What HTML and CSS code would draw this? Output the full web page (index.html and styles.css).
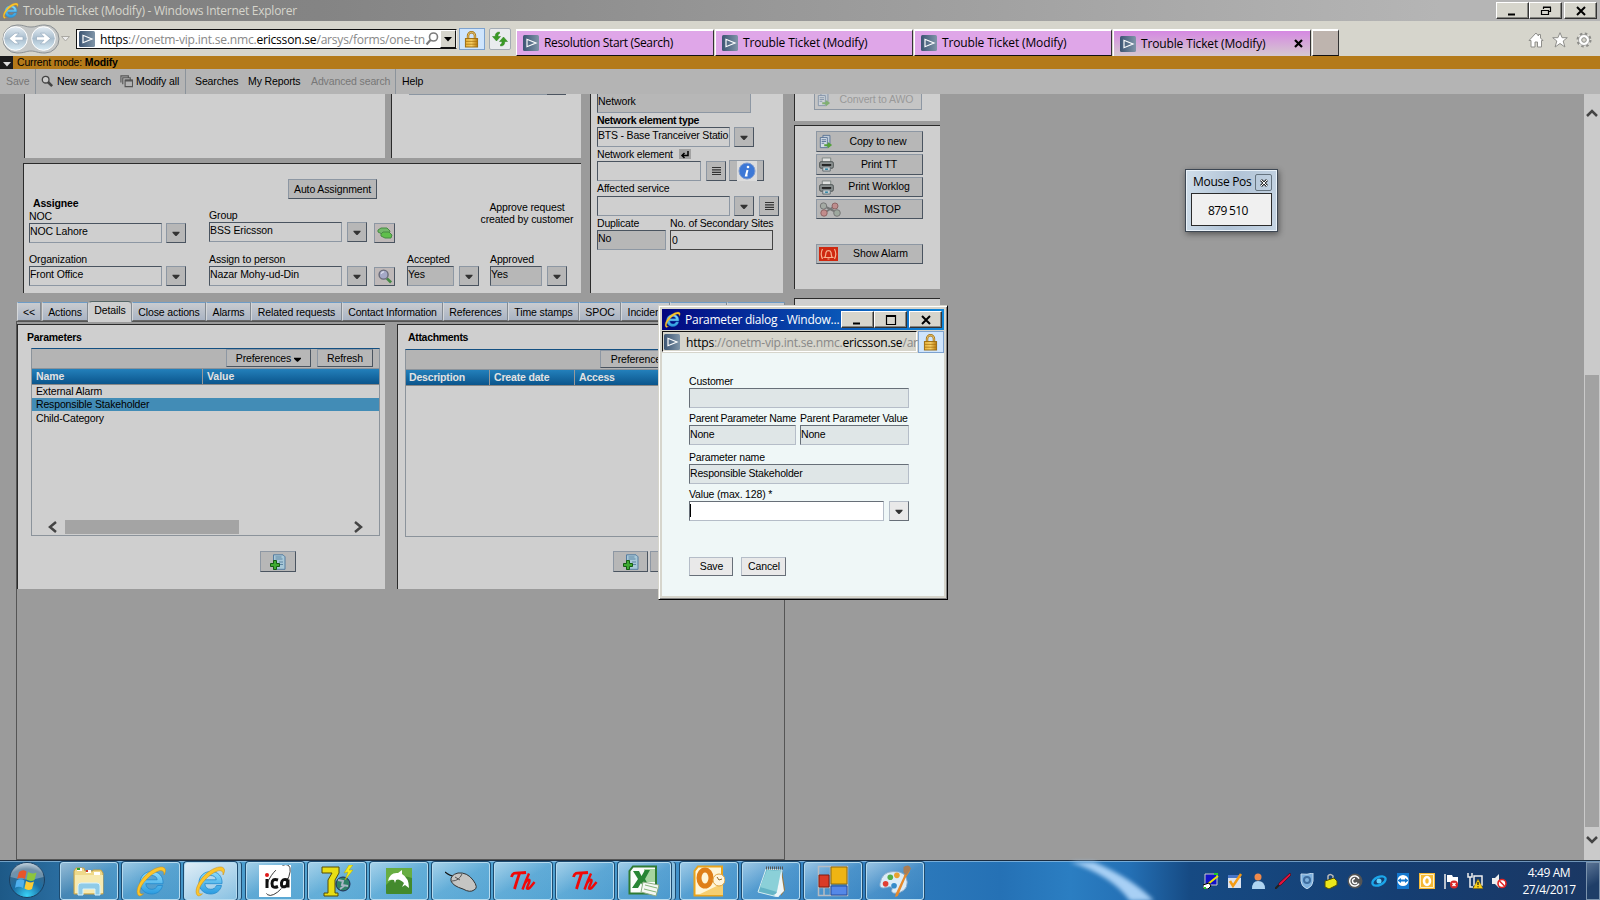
FILE: index.html
```html
<!DOCTYPE html>
<html lang="en">
<head>
<meta charset="utf-8">
<title>Trouble Ticket (Modify)</title>
<link rel="stylesheet" href="styles.css">
</head>
<body>
<svg class="defs" aria-hidden="true">
  <defs>
    <linearGradient id="g-site" x1="0" x2="1"><stop offset="0" stop-color="#3c5573"/><stop offset="1" stop-color="#8095a8"/></linearGradient>
    <linearGradient id="g-ie" x1="0" y1="0" x2="0" y2="1"><stop offset="0" stop-color="#8fdcfb"/><stop offset="1" stop-color="#2a9be0"/></linearGradient>
    <linearGradient id="g-nav" x1="0" y1="0" x2="0" y2="1"><stop offset="0" stop-color="#e4edf4"/><stop offset=".5" stop-color="#a9bdcd"/><stop offset="1" stop-color="#d9ecf6"/></linearGradient>
    <linearGradient id="g-lock" x1="0" x2="1"><stop offset="0" stop-color="#e8b23a"/><stop offset=".5" stop-color="#f6cf66"/><stop offset="1" stop-color="#b97a0c"/></linearGradient>
    <radialGradient id="g-orb" cx=".5" cy=".95" r=".95"><stop offset="0" stop-color="#39d4f8"/><stop offset=".45" stop-color="#1b6ea5"/><stop offset=".8" stop-color="#3d6888"/><stop offset="1" stop-color="#b5c9d8"/></radialGradient>
  </defs>
  <symbol id="site" viewBox="0 0 16 16"><rect width="16" height="16" rx="1.5" fill="url(#g-site)"/><path d="M4 4.3v7.4L13 8z" fill="none" stroke="#fff" stroke-width="1.2"/></symbol>
  <symbol id="ie" viewBox="0 0 32 32">
    <path d="M27.500 20.500H22.500C21.500 23 19.500 24.300 16.800 24.300C13.300 24.300 11 22.200 10.800 18.700H28C28.700 11.500 24 6.500 17 6.500C10 6.500 5 11.200 5 17.700C5 24.500 10 29 16.700 29C22 29 26.200 26 27.500 20.500ZM11 14.800C11.500 12 13.600 10.500 16.700 10.500C19.800 10.500 21.900 12 22.200 14.800Z" fill="url(#g-ie)" stroke="#2389cc" stroke-width=".8" fill-rule="evenodd"/>
    <path d="M3.500 30.500C-.5 27 4 15.500 13 8C20 2.200 28 .2 30 3.500C31 5.200 30.500 7.500 29 10C29.400 6.500 27.500 4.800 23.500 6C16 8.500 5.500 19 4.800 26C4.600 28.500 6.200 29.600 8.500 28.800C6.800 30.500 4.800 31.500 3.500 30.500Z" fill="#fcc52c" stroke="#c98a12" stroke-width=".5"/>
  </symbol>
  <symbol id="lock" viewBox="0 0 16 18"><path d="M4.300 9V5a3.700 3.700 0 0 1 7.400 0v4" fill="none" stroke="#a87412" stroke-width="2.600"/><path d="M4.300 9V5a3.700 3.700 0 0 1 7.400 0v4" fill="none" stroke="#e3c67a" stroke-width="1"/><rect x="1.500" y="8" width="13" height="9" fill="url(#g-lock)" stroke="#9a6a0e"/><path d="M2 11h12M2 14h12" stroke="#a8720f" stroke-width=".8"/></symbol>
  <symbol id="down" viewBox="0 0 8 5"><path d="M.5.800h7v1L4.500 5h-1L.5 1.800z" fill="#333"/></symbol>
  <symbol id="list" viewBox="0 0 9 8"><path d="M0 .5h9M0 2.900h9M0 5.300h9M0 7.500h9" stroke="#333" stroke-width="1.200"/></symbol>
  <symbol id="mag" viewBox="0 0 16 16"><path d="M10 10l4.500 4.500" stroke="#468946" stroke-width="3"/><circle cx="6.500" cy="6" r="4.800" fill="#a5a9c7" stroke="#696b7a" stroke-width="1.500"/><path d="M4 5a3 3 0 0 1 3-2" stroke="#dfe2f0" stroke-width="1.300" fill="none"/></symbol>
  <symbol id="copy" viewBox="0 0 16 16"><path d="M4.500 1h8v10h-8z" fill="#bfcbd8" stroke="#536f92"/><path d="M1.500 3.500h8V15h-8z" fill="#d3dce5" stroke="#536f92"/><path d="M3 6h5M3 8h5M3 10h3" stroke="#536f92"/><path d="M6 11h4V8.500L15 12l-5 4v-2.500H6z" fill="#55a13c"/></symbol>
  <symbol id="print" viewBox="0 0 16 16"><path d="M3.500 1h9v5h-9z" fill="#dfe0df" stroke="#7c8381"/><rect x=".7" y="5" width="14.600" height="7" rx="1.500" fill="#8b9191" stroke="#4b5151"/><path d="M3 8.500h10" stroke="#222" stroke-width="2"/><path d="M4 10.500h8V15H4z" fill="#c4cdd1" stroke="#626c70"/><path d="M6.500 13h3" stroke="#247fa0" stroke-width="1.500"/></symbol>
  <symbol id="newdoc" viewBox="0 0 16 16"><path d="M3.500.8h9.500l2 2v12.500H3.500z" fill="#a8c8d8" stroke="#547ca0"/><path d="M5.500 3h6M5.500 5h7M9 8h4M10 10.500h3" stroke="#5e86a3"/><path d="M3.500 6.500h3v3h3v3h-3v3h-3v-3h-3v-3h3z" fill="#3faa31" stroke="#155d13"/></symbol>
  <symbol id="th" viewBox="0 0 26 22"><path d="M1.500 7C3 1 7 3.500 16 2.500M9.500 3.500C7.500 9 6 14 4.500 19" fill="none" stroke="#f00808" stroke-width="2.800"/><path d="M19 3.500C16.500 9 14.500 14 12.500 19.500M14 15c2-4 4.500-6 5.500-5s-2.500 6-2.500 8.500c1.500 1.500 4-2 7.500-6.500" fill="none" stroke="#f00808" stroke-width="2.400"/></symbol>
</svg>

<header class="titlebar">
  <svg class="i17"><use href="#ie"/></svg>
  <span class="title-text">Trouble Ticket (Modify) - Windows Internet Explorer</span>
  <div class="winbtns">
    <b class="winbtn"><svg viewBox="0 0 12 10"><path d="M1 8.500h7" stroke="#000" stroke-width="2"/></svg></b>
    <b class="winbtn"><svg viewBox="0 0 12 10"><path d="M3.500 3V1.500h7v4H9M3 1h8M1.500 4.500h7v4h-7zM1 4.500h8" fill="none" stroke="#000" stroke-width="1.200"/></svg></b>
    <b class="winbtn close"><svg viewBox="0 0 12 10"><path d="M2 1l8 8M10 1L2 9" stroke="#000" stroke-width="2"/></svg></b>
  </div>
</header>

<nav class="navbar">
  <svg class="navarrows" viewBox="0 0 72 32"><path d="M16 1C24 1 24 3 30 3S36 1 44 1a14 14 0 0 1 0 28C36 29 35 27 30 27S24 29 16 29A14 14 0 0 1 16 1z" fill="#c5c8c8" stroke="#8b9093"/><circle cx="14.500" cy="14.500" r="11.800" fill="url(#g-nav)" stroke="#fff"/><circle cx="42.500" cy="14.500" r="11.800" fill="url(#g-nav)" stroke="#fff"/><path d="M22 12.800v3.400h-7.500l3.500 3.600h-4L8 14.500l6-5.300h4l-3.500 3.600zM35.500 12.800v3.400H43l-3.500 3.600h4l6-5.300-6-5.300h-4l3.500 3.600z" fill="#fff" stroke="#8fa5b8" stroke-width=".6"/><path d="M60.500 12.500h8L64.500 17z" fill="#eee" stroke="#aaa9a3"/></svg>
  <div class="address">
    <svg class="i16"><use href="#site"/></svg>
    <span class="url"><i>https</i>://onetm-vip.int.se.nmc.<i>ericsson.se</i>/arsys/forms/one-tn</span>
    <svg class="search" viewBox="0 0 14 14"><circle cx="8.500" cy="5" r="4" fill="none" stroke="#7c7c7c" stroke-width="1.600"/><path d="M5.500 8L1.500 12.500" stroke="#7c7c7c" stroke-width="2.200"/></svg>
    <b class="drop"><svg viewBox="0 0 8 5"><path d="M0 0h8L4 4.500z"/></svg></b>
  </div>
  <div class="lockbtn"><svg class="lockicon"><use href="#lock"/></svg></div>
  <div class="refresh"><svg viewBox="0 0 16 16"><path d="M7.500 1C4.500 1 3.200 2.500 3.200 5.500H.5L4.500 10l4-4.500H6C6 3.800 6.300 3 7.500 2.500z" fill="#3a9c25" stroke="#2b7d1b" stroke-width=".5"/><path d="M8.500 15c3 0 4.300-1.500 4.300-4.500h2.700L11.500 6l-4 4.500H10c0 1.700-.3 2.500-1.500 3z" fill="#3a9c25" stroke="#2b7d1b" stroke-width=".5"/></svg></div>
  <div class="tabs">
    <div class="tab"><svg class="i16"><use href="#site"/></svg><span>Resolution Start (Search)</span></div>
    <div class="tab"><svg class="i16"><use href="#site"/></svg><span>Trouble Ticket (Modify)</span></div>
    <div class="tab"><svg class="i16"><use href="#site"/></svg><span>Trouble Ticket (Modify)</span></div>
    <div class="tab active"><svg class="i16"><use href="#site"/></svg><span>Trouble Ticket (Modify)</span><svg class="tabx" viewBox="0 0 9 9"><path d="M1 1l7 7M8 1L1 8" stroke="#000" stroke-width="2.200"/></svg></div>
    <div class="newtab"></div>
  </div>
  <div class="tools">
    <svg viewBox="0 0 16 16"><path d="M8 1L1 8.500h2V15h4v-5h2.500v5h4V8.500H15L12.500 6V2.500h-2V4z" fill="#fff" stroke="#8e8e8a"/></svg>
    <svg viewBox="0 0 16 16"><path d="M8 .7l2.100 5h5.200L11.200 9l1.700 6L8 11.500 3.100 15l1.700-6L.7 5.700h5.200z" fill="#fff" stroke="#8e8e8a"/></svg>
    <svg viewBox="0 0 16 16"><circle cx="8" cy="8" r="6.300" fill="#fff" stroke="#8e8e8a" stroke-width="2.400" stroke-dasharray="2.500 2.450"/><circle cx="8" cy="8" r="5.500" fill="#fff" stroke="#8e8e8a" stroke-width=".8"/><circle cx="8" cy="8" r="2.300" fill="#d6d5cc" stroke="#8e8e8a"/></svg>
  </div>
</nav>

<div class="modebar"><b class="modearrow"><svg viewBox="0 0 8 5"><path d="M0 0h8L4 4.500z" fill="#ddd"/></svg></b><span>Current mode: <strong>Modify</strong></span></div>

<div class="menubar">
  <span class="m m-save off">Save</span>
  <span class="m m-new"><svg class="i13" viewBox="0 0 14 14"><circle cx="5" cy="5" r="3.600" fill="#ccc" stroke="#444" stroke-width="1.400"/><path d="M7.500 7.500L12 12" stroke="#444" stroke-width="2.800"/></svg>New search</span>
  <span class="m m-mod"><svg class="i13" viewBox="0 0 14 14"><path d="M1 8V1h8v2M3 10V3h8v2M5.500 5.500h8v7h-8z" fill="none" stroke="#555" stroke-width="1.200"/><path d="M5.500 6h8" stroke="#555" stroke-width="2"/></svg>Modify all</span>
  <span class="m m-sea">Searches</span>
  <span class="m m-rep">My Reports</span>
  <span class="m m-adv off">Advanced search</span>
  <span class="m m-help">Help</span>
</div>

<main class="page">
  <div class="form">
    <div class="upper">
      <div class="upper-left">
        <div class="stubs"><section class="panel stub1"></section><section class="panel stub2"><div class="sliver"></div></section></div>
        <section class="panel assignee">
          <button class="btn auto">Auto Assignment</button>
          <h2>Assignee</h2>
          <div class="arow first">
            <div class="field c1"><label>NOC</label><div class="line"><div class="in w133">NOC Lahore</div><b class="dd"><svg><use href="#down"/></svg></b></div></div>
            <div class="field c2 up1"><label>Group</label><div class="line"><div class="in w133">BSS Ericsson</div><b class="dd g5"><svg><use href="#down"/></svg></b><b class="ib"><svg viewBox="0 0 16 13"><path d="M1 3l3-2h6l3 3-1 3H5L1 5z" fill="#72b869" stroke="#478b42"/><path d="M4 7l2-2h6l3 3-1 3H8L4 9z" fill="#5fbf4c" stroke="#478b42"/></svg></b></div></div>
            <p class="approve">Approve request<br>created by customer</p>
          </div>
          <div class="arow">
            <div class="field c1"><label>Organization</label><div class="line"><div class="in w133">Front Office</div><b class="dd"><svg><use href="#down"/></svg></b></div></div>
            <div class="field c2"><label>Assign to person</label><div class="line"><div class="in w133">Nazar Mohy-ud-Din</div><b class="dd g5"><svg><use href="#down"/></svg></b><b class="ib mg"><svg class="i16"><use href="#mag"/></svg></b></div></div>
            <div class="field c3"><label>Accepted</label><div class="line"><div class="in ro w47">Yes</div><b class="dd g5"><svg><use href="#down"/></svg></b></div></div>
            <div class="field"><label>Approved</label><div class="line"><div class="in ro w52">Yes</div><b class="dd g5"><svg><use href="#down"/></svg></b></div></div>
          </div>
        </section>
      </div>
      <section class="panel network">
        <div class="in ro net0">Network</div>
        <label class="bold">Network element type</label>
        <div class="line"><div class="in w133 tight">BTS - Base Tranceiver Statio</div><b class="dd"><svg><use href="#down"/></svg></b></div>
        <label class="lab2">Network element <b class="enter"><svg viewBox="0 0 10 9"><path d="M8 1v4.500H2M4.500 3L2 5.500 4.500 8" fill="none" stroke="#000" stroke-width="1.500"/></svg></b></label>
        <div class="line"><div class="in w104">&nbsp;</div><b class="dd g5"><svg class="lst"><use href="#list"/></svg></b><b class="info"><svg viewBox="0 0 20 20"><rect width="20" height="20" fill="#dcdcdc"/><circle cx="10" cy="10" r="8" fill="#3d78d6" stroke="#7d9bd0"/><path d="M10.500 9L9 14.500h1.500" stroke="#fff" stroke-width="2" fill="none"/><circle cx="11" cy="6" r="1.300" fill="#fff"/></svg></b></div>
        <label class="lab3">Affected service</label>
        <div class="line"><div class="in w133">&nbsp;</div><b class="dd"><svg><use href="#down"/></svg></b><b class="dd g5"><svg class="lst"><use href="#list"/></svg></b></div>
        <div class="line last"><div><label>Duplicate</label><div class="in ro w69">No</div></div><div><label>No. of Secondary Sites</label><div class="in num">0</div></div></div>
      </section>
      <aside class="actions">
        <section class="panel act1"><button class="btn act off"><svg class="i14"><use href="#copy"/></svg><span>Convert to AWO</span></button></section>
        <section class="panel act2">
          <button class="btn act"><svg class="i14"><use href="#copy"/></svg><span>Copy to new</span></button>
          <button class="btn act"><svg class="i15"><use href="#print"/></svg><span class="s2">Print TT</span></button>
          <button class="btn act short"><svg class="i15"><use href="#print"/></svg><span class="s2">Print Worklog</span></button>
          <button class="btn act short"><svg class="wide" viewBox="0 0 22 15"><path d="M5 4l12 6M5 11L16 4" stroke="#777" stroke-width="2"/><circle cx="4.500" cy="4" r="3.200" fill="#a4aaa3" stroke="#777"/><circle cx="16" cy="4" r="3" fill="#be8d8d" stroke="#8e6565"/><circle cx="5" cy="11" r="3.200" fill="#c28c8c" stroke="#8e6565"/><circle cx="18" cy="11" r="3.300" fill="#9da89e" stroke="#777"/></svg><span class="s3">MSTOP</span></button>
          <button class="btn act short alarm"><svg class="wide19" viewBox="0 0 19 14"><rect width="19" height="14" fill="#cf2810"/><path d="M5.500 10.500h8c-1.500-1-1-3-1.500-5a2.600 2.600 0 0 0-5 0c-.5 2 0 4-1.500 5zM8.500 12h2M3.500 2q-2.500 5 0 10M15.500 2q2.500 5 0 10" fill="none" stroke="#f6b08e" stroke-width="1.200"/></svg><span class="s4">Show Alarm</span></button>
        </section>
        <section class="panel act3"></section>
      </aside>
    </div>

    <div class="ftabs">
      <span class="t1">&lt;&lt;</span><span class="t2">Actions</span><span class="t3 on">Details</span><span class="t4">Close actions</span><span class="t5">Alarms</span><span class="t6">Related requests</span><span class="t7">Contact Information</span><span class="t8">References</span><span class="t9">Time stamps</span><span class="t10">SPOC</span><span class="t11">Incident</span><span class="t12"></span><span class="t13"></span>
    </div>
    <div class="tabbody">
      <section class="panel params">
        <h2>Parameters</h2>
        <div class="table">
          <div class="tbar"><button class="btn pref">Preferences<svg viewBox="0 0 8 5"><path d="M0 .5h8v1L4.500 5h-1L0 1.500z"/></svg></button><button class="btn ref">Refresh</button></div>
          <div class="thead"><span class="n">Name</span><span>Value</span></div>
          <div class="tr">External Alarm</div>
          <div class="tr sel">Responsible Stakeholder</div>
          <div class="tr third">Child-Category</div>
          <div class="hscroll"><svg viewBox="0 0 9 12"><path d="M8 1L2 6l6 5" fill="none" stroke="#444" stroke-width="2.500"/></svg><i></i><svg viewBox="0 0 9 12"><path d="M1 1l6 5-6 5" fill="none" stroke="#444" stroke-width="2.500"/></svg></div>
        </div>
        <button class="btn add"><svg class="i16"><use href="#newdoc"/></svg></button>
      </section>
      <section class="panel attach">
        <h2>Attachments</h2>
        <div class="table">
          <div class="tbar"><button class="btn pref">Preferences</button></div>
          <div class="thead"><span class="d">Description</span><span class="c">Create date</span><span>Access</span></div>
        </div>
        <div class="line adds"><button class="btn add"><svg class="i16"><use href="#newdoc"/></svg></button><button class="btn add"></button></div>
      </section>
    </div>
  </div>
  <div class="vscroll">
    <svg viewBox="0 0 12 9"><path d="M1 7l5-5 5 5" fill="none" stroke="#444" stroke-width="2.500"/></svg>
    <i></i>
    <svg viewBox="0 0 12 9"><path d="M1 2l5 5 5-5" fill="none" stroke="#444" stroke-width="2.500"/></svg>
  </div>
</main>

<footer class="taskbar">
  <svg class="orb" viewBox="0 0 40 38"><circle cx="20" cy="19" r="17.500" fill="url(#g-orb)" stroke="#1b3f60"/><path d="M3.500 16a16.500 14 0 0 1 33 0Q20 21 3.500 16z" fill="#fff" opacity=".28"/><path d="M12 11q4-3 7.500-.5L18 18q-4-2.500-8 0z" fill="#e8562a"/><path d="M21 11q4 2.500 8.500.5L27.500 19q-4 2-8-.500z" fill="#8cc63e"/><path d="M9.500 19.500q4-2.500 8 0L16 27q-4-2.500-8-.3z" fill="#4fb0ee"/><path d="M19 20q4 2.500 8 .5L25 28q-4 2-7.500-.5z" fill="#fccb35"/></svg>
  <div class="tasks">
    <div class="task"><svg class="i34" viewBox="0 0 34 32"><path d="M2 6l2-3h8l1 3h8V5h8l2 3v21H2z" fill="#efd98a" stroke="#c2a04a"/><path d="M5 3h5v3H5zM14 5h5v3h-5zM22 7h6v3h-6z" fill="#fff"/><path d="M5 3h3v2H5z" fill="#2da12d"/><path d="M14 5h2v2h-2z" fill="#cc3a28"/><path d="M3 10h28v18H3z" fill="#f7eab0"/><path d="M6 30v-9q0-3 3-3h16q3 0 3 3v9h-5v-6H11v6z" fill="#8fcbe8" stroke="#d8f2fd"/></svg></div>
    <div class="task"><svg class="i32"><use href="#ie"/></svg></div>
    <div class="task stacked lit"><svg class="i32"><use href="#ie"/></svg></div>
    <div class="task"><svg class="i32" viewBox="0 0 32 32"><rect width="32" height="32" fill="#fff"/><ellipse cx="19" cy="15" rx="18" ry="8" transform="rotate(-55 19 15)" fill="none" stroke="#222" stroke-width=".8" stroke-dasharray="18 8"/><circle cx="8" cy="10" r="2" fill="#e01818"/><path d="M8 14v9M19 15q-6-2-6 3.500t6 3M29 15q-6-2-6.500 3t4 3.500q2 0 2.500-7v8" fill="none" stroke="#111" stroke-width="3"/></svg></div>
    <div class="task"><svg class="i34" viewBox="0 0 34 32"><path d="M2 2h17v6l-4 7v13h3v3H4v-3h4V15l4-7H2z" fill="#e8de14" stroke="#554d07"/><circle cx="23" cy="19" r="7" fill="#2e8067" stroke="#222b56"/><path d="M18 15l5 1-1 4 6 1M20 24l4-3" stroke="#a9b5c6" fill="none" stroke-width="2"/><path d="M29 0l-5 8 4-1-3 8 8-10h-4l4-5z" fill="#f6ed1a" stroke="#b3a706" stroke-width=".5"/></svg></div>
    <div class="task"><svg class="i26" viewBox="0 0 26 26"><rect width="26" height="26" rx="1" fill="#438a2d"/><path d="M0 0h26v10Q10 5 0 17z" fill="#67ad42"/><path d="M2 13Q4 4 12 5l4-3v4q7 4 7 14l-4-3-3 2 2-4q-5-5-8-3l-1 3-1-3q-3-1-6 1z" fill="#fff"/></svg></div>
    <div class="task"><svg class="i32" viewBox="0 0 32 32"><path d="M0 7q5 4 9 4" fill="none" stroke="#111" stroke-width="1.200"/><path d="M6 16q-1-6 7-8 9-1 15 7t1 10q-4 3-11-1Q8 21 6 16z" fill="#c5c5c3" stroke="#333"/><path d="M7 16q7 0 10-7M10 12l5 3" fill="none" stroke="#555"/></svg></div>
    <div class="task"><svg class="th"><use href="#th"/></svg></div>
    <div class="task"><svg class="th"><use href="#th"/></svg></div>
    <div class="task stacked"><svg class="i32" viewBox="0 0 32 32"><path d="M5 1.500h23v27H1.500V6z" fill="#fafcf9" stroke="#2f7b32" stroke-width="2"/><path d="M16 4h11v13H16z" fill="#a6d5a0"/><path d="M5 6h6l2.500 5L17 5h5l-5 9 5 9h-6l-3-5-3 5H4l6-9z" fill="#288534"/><path d="M15 17l16 3-3 11-15-4z" fill="#f4f7f2" stroke="#8bad83"/><path d="M17 20l12 3M16 24l12 3" stroke="#83b478"/></svg></div>
    <div class="task"><svg class="i32" viewBox="0 0 32 32"><path d="M5 1.500h24v29H1.500V6z" fill="#fff6d7" stroke="#e9a41b" stroke-width="2"/><path d="M5 30l25-12v12z" fill="#f7cf70"/><ellipse cx="12" cy="13" rx="6" ry="8" fill="none" stroke="#df7f18" stroke-width="5"/><circle cx="26" cy="15" r="6" fill="#fff6dd" stroke="#dda340"/><path d="M24 12l2 3 3-1" fill="none" stroke="#946b23"/></svg></div>
    <div class="task"><svg class="i32" viewBox="0 0 32 32"><path d="M27 5l3 20-4 6z" fill="#9a7a43"/><path d="M11 4l16 1-4 27-20-5z" fill="#64b4c5" stroke="#d8eef2"/><path d="M12 5l14 1-4 21L5 22z" fill="#8bd0d8"/><path d="M26 6l3 20-6 6-5-2q4-1 4-4z" fill="#eef6f8"/><path d="M11 3h17" stroke="#555" stroke-width="3" stroke-dasharray="1 1"/></svg></div>
    <div class="task"><svg class="i32" viewBox="0 0 32 32"><path d="M1.500 1.500h29v29h-29zM13.500 1v30M1 22.500h30M7 22v9" fill="none" stroke="#b6bbc1" stroke-width="1.500"/><path d="M14 2h16v17H14z" fill="#efb413" stroke="#8e6b0d"/><path d="M2 10h10v12H2z" fill="#d93b27" stroke="#801c11"/><path d="M14 21h16v9H14z" fill="#5588e8" stroke="#254d9f"/></svg></div>
    <div class="task"><svg class="i34" viewBox="0 0 34 34"><path d="M1 20Q3 7 15 7q14-1 15 11 0 11-13 12-5 0-3-5-1-3-6-1-8 2-7-4z" fill="#dcecf7" stroke="#86a9c8"/><circle cx="7" cy="20" r="3" fill="#e13e33"/><circle cx="12" cy="13" r="3" fill="#54ae49"/><circle cx="19" cy="11" r="3" fill="#e9a230"/><circle cx="16" cy="22" r="3" fill="#368cca"/><path d="M30 2l3 4-5 8-8 19-3 1 1-4 8-17z" fill="#e68a2c"/><path d="M26 2q6-4 8 2l-5 7-3-3z" fill="#aa7d54"/></svg></div>
  </div>
  <svg class="streak" viewBox="0 0 120 40" preserveAspectRatio="none"><path d="M28 0h24Q92 18 112 40H88Q70 14 28 0z" fill="#a8d0f5"/></svg>
  <div class="tray">
    <svg viewBox="0 0 16 16"><path d="M2 1h12v11H2z" fill="#1111c8" stroke="#ccc"/><path d="M5 11l10-8" stroke="#eee600" stroke-width="2"/><path d="M0 16v-4l6-2 2 3-3 3z" fill="#fff" stroke="#000"/><path d="M11 1h4M1 15h2" stroke="#2c2" stroke-width="2"/></svg>
    <svg viewBox="0 0 16 16"><path d="M1 2h13v13H1z" fill="#dce2ed"/><path d="M1 2h13v3H1z" fill="#4876c8"/><path d="M3 8l3 5 8-12" fill="none" stroke="#f59b13" stroke-width="2.500"/></svg>
    <svg viewBox="0 0 16 16"><circle cx="7" cy="4" r="3.500" fill="#ee8a4c"/><path d="M1 16q0-8 6-8 7 0 7 8z" fill="#afd4f1"/></svg>
    <svg viewBox="0 0 16 16"><path d="M15 0l1 2-10 10-3 1 1-3z" fill="#e3123d" stroke="#40101a" stroke-width=".7"/><path d="M0 16l4-4" stroke="#222" stroke-width="2"/></svg>
    <svg viewBox="0 0 16 16"><path d="M2 1q6 1 12-1v8q0 5-6 8-6-3-6-8z" fill="#7db0de" stroke="#c2d9ee"/><circle cx="8" cy="7" r="3" fill="none" stroke="#3e6da0" stroke-width="2"/></svg>
    <svg viewBox="0 0 16 16"><path d="M5 7V3q2-3 5 0v4" fill="none" stroke="#bbb" stroke-width="1.500"/><path d="M2 8l9-3 3 3v4l-8 4-4-2z" fill="#ece71b" stroke="#555000"/></svg>
    <svg viewBox="0 0 16 16"><circle cx="8" cy="8" r="7.500" fill="#555"/><path d="M12 5.500a5 5 0 1 0 0 5M8 5.500a2.500 2.500 0 1 0 2 4" fill="none" stroke="#fff" stroke-width="1.500"/></svg>
    <svg viewBox="0 0 16 16"><ellipse cx="8" cy="8" rx="7" ry="4" transform="rotate(-25 8 8)" fill="none" stroke="#1ba6ea" stroke-width="2.300"/><circle cx="8" cy="8" r="2.500" fill="#65d0fc"/></svg>
    <svg viewBox="0 0 16 16"><path d="M2 0h12v16H2z" fill="#1478cf"/><circle cx="8" cy="7.500" r="5.500" fill="#fff"/><path d="M2.500 7.500L6 5v1.500h4V5l3.500 2.500L10 10V8.500H6V10z" fill="#1478cf"/></svg>
    <svg viewBox="0 0 16 16"><path d="M0 0h16v16H0z" fill="#f6b934"/><path d="M1.500 1.500h13v13h-13z" fill="none" stroke="#fff1c4"/><ellipse cx="8" cy="8" rx="3" ry="4" fill="none" stroke="#fff" stroke-width="2.500"/></svg>
    <svg viewBox="0 0 16 16"><path d="M2 1v15" stroke="#eee" stroke-width="1.500"/><path d="M4 2h5l1 2h5v7H8l-1-2H4z" fill="#fff"/><circle cx="11" cy="11.500" r="4" fill="#d92727"/><path d="M9.500 10l3 3M12.500 10l-3 3" stroke="#fff" stroke-width="1.300"/></svg>
    <svg viewBox="0 0 16 16"><path d="M1 0v4h4V0M3 4v10h3M7 3h8v9H7z" fill="none" stroke="#eee" stroke-width="1.500"/><path d="M11 6l5 9.500H6z" fill="#fcd116" stroke="#795e05" stroke-width=".5"/><path d="M11 9v3M11 13.300v1" stroke="#111" stroke-width="1.200"/></svg>
    <svg viewBox="0 0 16 16"><path d="M1 5h3l4-4v14l-4-4H1z" fill="#eee"/><circle cx="11" cy="10.500" r="4" fill="#fff" stroke="#e02222" stroke-width="1.600"/><path d="M8.500 8l5 5" stroke="#e02222" stroke-width="1.500"/></svg>
  </div>
  <div class="clock">4:49 AM<br>27/4/2017</div>
  <div class="showdesk"></div>
</footer>

<div class="mousepos">
  <div class="mp-title"><span>Mouse Pos</span><b><svg viewBox="0 0 8 8"><path d="M1 1l6 6M7 1L1 7" stroke="#333" stroke-width="2.800"/><path d="M1 1l6 6M7 1L1 7" stroke="#fff" stroke-width="1"/></svg></b></div>
  <div class="mp-body">879 510</div>
</div>

<div class="dialog">
  <div class="dlg-title"><svg class="i17"><use href="#ie"/></svg><span>Parameter dialog - Window...</span>
    <b class="winbtn"><svg viewBox="0 0 12 10"><path d="M1 8.500h7" stroke="#000" stroke-width="2"/></svg></b><b class="winbtn"><svg viewBox="0 0 12 10"><path d="M1.500.5h9v9h-9zM1 1.500h10" fill="none" stroke="#000" stroke-width="1.200"/></svg></b><b class="winbtn close"><svg viewBox="0 0 12 10"><path d="M2 1l8 8M10 1L2 9" stroke="#000" stroke-width="2"/></svg></b></div>
  <div class="dlg-addr"><div class="dlg-url"><svg class="i16"><use href="#site"/></svg><span class="url"><i>https</i>://onetm-vip.int.se.nmc.<i>ericsson.se</i>/ar</span></div><div class="lockbtn"><svg class="lockicon"><use href="#lock"/></svg></div></div>
  <div class="dlg-body">
    <label>Customer</label>
    <div class="in ro">&nbsp;</div>
    <div class="pair"><div class="pa"><label>Parent Parameter Name</label><div class="in ro">None</div></div><div class="pb"><label>Parent Parameter Value</label><div class="in ro">None</div></div></div>
    <label class="pn">Parameter name</label>
    <div class="in ro">Responsible Stakeholder</div>
    <label class="vl">Value (max. 128) *</label>
    <div class="line"><div class="in val"><i class="caret"></i></div><b class="dd"><svg><use href="#down"/></svg></b></div>
    <div class="line dbtns"><button class="btn save">Save</button><button class="btn cancel">Cancel</button></div>
  </div>
</div>
</body>
</html>
```
FILE: styles.css
```css
* { box-sizing: border-box; }
body { margin: 0; width: 1600px; height: 900px; overflow: hidden; display: flex; flex-direction: column; background: #9b9b9b; color: #000; font: 10.5px/14px "Liberation Sans", Arial, sans-serif; letter-spacing: -.12px; }
svg { display: block; flex: none; }
i { font-style: normal; }
h2 { margin: 0; font-size: 10.5px; line-height: 14px; letter-spacing: -.15px; }
button { font: inherit; letter-spacing: inherit; color: inherit; padding: 0; }
label { display: block; white-space: nowrap; }
.defs { position: absolute; width: 0; height: 0; }
.i13 { width: 13px; height: 13px; }
.i14 { width: 14px; height: 15px; }
.i15 { width: 15px; height: 15px; }
.i16 { width: 16px; height: 16px; }
.i17 { width: 17px; height: 17px; }
.i26 { width: 26px; height: 26px; }
.i32 { width: 32px; height: 32px; }
.i34 { width: 34px; height: 32px; }
.line { display: flex; }

/* browser chrome */
.titlebar { flex: none; height: 21px; display: flex; align-items: center; padding: 0 3px 0 2px; background: linear-gradient(90deg, #808080, #848484 20%, #b5b5b5 90%); color: #d6d5cc; }
.title-text { font: 12px/20px "Open Sans", sans-serif; letter-spacing: -.26px; margin-left: 4px; white-space: nowrap; }
.winbtns { display: flex; margin-left: auto; }
.winbtn { width: 33px; height: 17px; display: flex; align-items: center; justify-content: center; background: #d6d5cc; border: 1px solid; border-color: #fff #333 #333 #fff; box-shadow: inset -1px -1px #858580; }
.winbtn svg { width: 12px; height: 10px; }
.winbtn.close { margin-left: 2px; }
.navbar { flex: none; height: 35px; display: flex; background: #d6d5cc; font: 12px/16px "Open Sans", sans-serif; letter-spacing: -.1px; }
.navarrows { width: 72px; height: 32px; margin: 3px 0 0 1px; }
.address { display: flex; align-items: center; width: 381px; height: 20px; margin: 8px 0 0 3px; background: #fff; border: 1px solid #111; border-right-color: #eee; padding-left: 2px; }
.url { font: 12.100px/18px "Open Sans", sans-serif; letter-spacing: -.23px; color: #888; margin-left: 5px; white-space: nowrap; }
.url i { color: #000; }
.address .url { width: 324px; padding-top: 1px; }
.search { width: 14px; height: 14px; margin-left: 1px; }
.drop { width: 16px; height: 18px; margin-left: auto; background: #d6d5cc; border: 1px solid; border-color: #fff #111 #111 #fff; display: flex; align-items: center; justify-content: center; }
.drop svg { width: 8px; height: 5px; }
.lockbtn { flex: none; width: 26px; height: 22px; background: #cfe5fd; border: 1px solid #7da2ce; display: flex; align-items: center; justify-content: center; }
.lockicon { width: 15px; height: 17px; margin-right: 1px; }
.navbar .lockbtn { margin: 7px 0 0 2px; }
.refresh { width: 22px; height: 22px; margin: 7px 0 0 4px; background: #e9ecee; border: 1px solid #a3abb3; border-radius: 2px; padding: 2px; }
.refresh svg { width: 16px; height: 16px; }
.tabs { display: flex; margin: 8px 0 0 5px; height: 27px; }
.tab { width: 198px; margin-right: 1px; display: flex; align-items: center; padding-left: 6px; background: #dfa6e8; border: solid; border-width: 2px 1px 1px 1px; border-color: #fff #333 #111 #fff; white-space: nowrap; }
.tab span { margin-left: 5px; font-size: 12px; letter-spacing: -.14px; }
.tab:first-child span { letter-spacing: -.36px; }
.tab:first-child span { letter-spacing: -.1px; }
.tab.active { background: linear-gradient(#d588e2, #d5c9cf); border-bottom: 0; width: 198px; }
.tab.active span { padding-top: 1px; }
.tabx { width: 9px; height: 9px; margin-left: auto; margin-right: 7px; }
.tab:first-child span { letter-spacing: -.34px; }
.newtab { width: 27px; background: #beb4ae; border: solid; border-width: 2px 1px 1px 1px; border-color: #fff #333 #111 #fff; }
.tools { display: flex; gap: 8px; margin: 11px 8px 0 auto; }
.tools svg { width: 16px; height: 16px; }

.modebar { flex: none; height: 13px; display: flex; background: #b47a19; line-height: 12px; font-size: 10.5px; letter-spacing: -.16px; }
.modearrow { width: 13px; background: #1b1b1b; display: flex; align-items: center; justify-content: center; padding-top: 3px; }
.modearrow svg { width: 8px; height: 5px; }
.modebar span { margin-left: 4px; }
.menubar { flex: none; height: 25px; display: flex; background: #b4b4b4; line-height: 25px; }
.m { display: flex; align-items: center; white-space: nowrap; }
.m svg { margin-right: 3px; }
.off { color: #777; }
.m-save { width: 36px; padding-left: 6px; border-right: 1px solid #8b939b; }
.m-new { width: 80px; padding-left: 5px; }
.m-mod { width: 70px; padding-left: 4px; border-right: 1px solid #8b939b; }
.m-sea { width: 62px; padding-left: 9px; }
.m-rep { width: 63px; }
.m-adv { width: 85px; border-right: 1px solid #8b939b; }
.m-help { padding-left: 6px; }

/* form */
.page { flex: none; height: 766px; display: flex; justify-content: space-between; overflow: hidden; }
.form { width: 960px; }
.panel { background: #cfcfcf; border: 0 solid #2b2b2b; border-left-width: 1px; }
.upper { display: flex; height: 207px; }
.upper-left { margin-left: 23px; width: 567px; }
.stubs { display: flex; height: 64px; padding-left: 1px; }
.stub1 { width: 361px; margin-right: 6px; }
.stub2 { width: 190px; padding-left: 17px; }
.sliver { width: 157px; height: 1px; background: linear-gradient(90deg, #8b96a2 88%, #4c5561 88%); }
.assignee { width: 558px; height: 130px; margin-top: 5px; border-top-width: 1px; padding-left: 5px; }
.btn { display: block; background: #b7b7b7; border: 1px solid; border-color: #8d97a3 #4a5460 #4a5460 #8d97a3; white-space: nowrap; text-align: center; }
.auto { width: 89px; height: 20px; margin: 15px 0 0 259px; }
.assignee h2 { margin: -3px 0 0 4px; height: 14px; }
.arow { display: flex; height: 43px; }
.arow.first { margin-top: -1px; }
.c1 { width: 180px; }
.c2 { width: 198px; }
.c3 { width: 83px; }
.up1 { margin-top: -1px; }
.in { height: 20px; border: 1px solid; border-color: #4a5460 #8d97a3 #8d97a3 #4a5460; line-height: 15px; white-space: nowrap; overflow: hidden; }
.tight { letter-spacing: -.19px; }
.ro { background: #b7b7b7; }
.dd { flex: none; width: 20px; height: 20px; margin-left: 4px; background: #b7b7b7; border: 1px solid; border-color: #8d97a3 #4a5460 #4a5460 #8d97a3; display: flex; align-items: center; justify-content: center; }
.dd svg { width: 8px; height: 5px; margin-top: 1px; }
.dd svg.lst { width: 9px; height: 8px; margin-top: 0; }
.g5 { margin-left: 5px; }
.ib { width: 21px; height: 20px; margin: 1px 0 0 7px; background: #bfb9b9; border: 1px solid; border-color: #8d97a3 #4a5460 #4a5460 #8d97a3; display: flex; align-items: center; justify-content: center; }
.ib svg { width: 16px; height: 15px; }
.ib.mg { height: 19px; }
.w133 { width: 133px; } .w104 { width: 104px; } .w47 { width: 47px; } .w52 { width: 52px; } .w69 { width: 69px; }
.approve { margin: -8px 0 0 72px; text-align: center; line-height: 12px; width: 96px; white-space: nowrap; }
.network { width: 193px; height: 199px; padding-left: 6px; }
.net0 { width: 154px; border-top: 0; height: 19px; }
.network label { line-height: 14px; height: 14px; }
.network .bold { font-weight: bold; letter-spacing: -.32px; }
.network .lab2 { display: flex; letter-spacing: -.2px; }
.enter { width: 12px; height: 10px; margin: 2px 0 0 6px; background: #a2a2a2; padding: 1px; }
.enter svg { width: 10px; height: 9px; }
.info { width: 35px; height: 21px; margin: -1px 0 0 3px; background: #b7b7b7; border: 1px solid; border-color: #8d97a3 #4a5460 #4a5460 #8d97a3; display: flex; justify-content: center; }
.info svg { width: 20px; height: 20px; }
.network .lab3 { margin-bottom: 1px; }
.network .last { gap: 4px; letter-spacing: -.18px; }
.num { width: 103px; border-color: #444; line-height: 19px; padding-left: 1px; }
.actions { margin-left: 11px; width: 147px; }
.act1 { height: 27px; width: 146px; padding-left: 19px; }
.act1 .act { width: 108px; height: 16px; border-top: 0; padding-bottom: 4px; background: #c5c5c5; border-color: #8d97a3; color: #999; overflow: hidden; }
.act1 .act svg { opacity: .6; }
.act2 { width: 146px; margin-top: 4px; height: 164px; border-top-width: 1px; padding: 5px 0 0 21px; }
.act { display: flex; align-items: center; width: 107px; height: 21px; margin-bottom: 2px; padding-left: 2px; }
.act span { flex: 1; padding-left: 1px; margin-top: -1px; }
.act .s2 { padding-left: 2px; margin-top: -2px; }
.act .s3 { padding-left: 2px; }
.act .s4 { padding-left: 1px; margin-top: -2px; }
.act.short { height: 20px; }
.act2 .wide { width: 22px; height: 15px; }
.wide19 { width: 19px; height: 14px; }
.alarm { margin-top: 25px; }
.act3 { width: 146px; margin-top: 9px; height: 9px; border-top-width: 1px; }

.ftabs { display: flex; height: 20px; padding-left: 17px; align-items: flex-end; }
.ftabs span { height: 19px; line-height: 19px; text-align: center; white-space: nowrap; overflow: hidden; background: linear-gradient(#c9ccd0, #a9b3c3); border-top: 1px solid #6d9cc7; border-right: 1px solid #838a92; border-left: 1px solid #d4d7da; border-bottom: 1px solid #666; }
.ftabs .on { height: 21px; background: #cfcfcf; border-bottom: 0; border-radius: 4px 4px 0 0; line-height: 17px; margin-bottom: -1px; border-top-color: #566; }
.t1 { width: 24px; margin-right: 1px; } .t2 { width: 46px; } .t3 { width: 44px; } .t4 { width: 74px; } .t5 { width: 45px; } .t6 { width: 91px; } .t7 { width: 101px; } .t8 { width: 65px; } .t9 { width: 71px; } .t10 { width: 42px; } .t11 { width: 49px; } .t12 { width: 57px; } .t13 { width: 58px; }
.ftabs .t7 { letter-spacing: -.16px; }
.tabbody { width: 769px; height: 539px; margin-left: 16px; border: 1px solid #555; padding-top: 2px; display: flex; align-items: flex-start; }
.params, .attach { height: 265px; border-top-width: 1px; }
.params { width: 368px; padding-left: 13px; margin-right: 12px; }
.params h2 { margin: 5px 0 0 -4px; height: 18px; }
.attach { width: 386px; padding-left: 7px; }
.attach h2 { margin: 5px 0 0 3px; height: 19px; letter-spacing: -.32px; }
.params h2 { letter-spacing: -.25px; }
.table { width: 349px; height: 188px; border: 1px solid #8b939b; border-top-color: #145082; }
.attach .table { width: 360px; height: 188px; }
.tbar { height: 20px; background: #b4b4b4; border-bottom: 1px solid #8b939b; display: flex; }
.tbar .btn { height: 18px; line-height: 16px; }
.pref { width: 85px; margin-left: 194px; display: flex; justify-content: center; align-items: center; }
.pref svg { width: 7px; height: 5px; margin: 2px 0 0 3px; }
.attach .pref { width: 85px; padding-right: 8px; }
.ref { width: 56px; margin-left: 6px; }
.thead { height: 16px; background: linear-gradient(#2380bb, #0b558c); color: #e2e2e2; font-weight: bold; line-height: 14px; display: flex; border-bottom: 1px solid #888; letter-spacing: -.05px; }
.thead span { padding-left: 4px; }
.attach .thead { letter-spacing: -.17px; }
.attach .thead .d { padding-left: 3px; }
.n { width: 171px; border-right: 1px solid #999; }
.d { width: 84px; border-right: 1px solid #999; } .c { width: 85px; border-right: 1px solid #999; }
.tr { height: 13px; line-height: 13px; padding-left: 4px; letter-spacing: -.15px; }
.tr.sel { background: #428cb6; }
.tr.third { padding-top: 1px; }
.hscroll { display: flex; align-items: center; height: 14px; margin-top: 96px; padding-left: 16px; }
.hscroll svg { width: 9px; height: 12px; }
.hscroll i { width: 174px; height: 14px; background: #a4a4a4; margin: 0 115px 0 8px; }
.add { width: 36px; height: 21px; display: flex; align-items: center; justify-content: center; }
.params .add { margin: 15px 0 0 229px; }
.adds { margin: 14px 0 0 208px; gap: 2px; }
.attach .add { width: 35px; }
.vscroll { width: 16px; background: #cacaca; display: flex; flex-direction: column; align-items: center; padding: 15px 0; }
.vscroll svg { width: 12px; height: 9px; }
.vscroll i { width: 14px; height: 452px; margin: 257px 0 8px; background: #a2a2a2; }

/* taskbar */
.taskbar { position: relative; flex: none; height: 40px; display: flex; border-top: 1px solid #1a2c40; background: linear-gradient(90deg, #1d5987 0, #2a6da0 60px, #3d8fc4 130px, #55a6d3 330px, #4d9fd0 560px, #3684c3 800px, #2571b5 1000px, #2b7ec2 1070px, #2470b5 1130px, #164a83 1190px, #153e72 1400px, #1b3763 1600px); box-shadow: inset 0 1px rgba(170,210,240,.6); }
.orb { width: 40px; height: 38px; margin-left: 7px; }
.tasks { display: flex; gap: 4px; margin: 1px 0 0 13px; }
.task { width: 58px; height: 38px; display: flex; align-items: center; justify-content: center; border: 1px solid #b6dbef; border-radius: 3px; box-shadow: 0 0 0 1px #1d4b70; background: linear-gradient(150deg, rgba(220,240,250,.6), rgba(150,205,235,.25) 50%, rgba(130,195,230,.15)); }
.stacked { width: 53px; margin-right: 5px; box-shadow: 0 0 0 1px #1d4b70, 4px 0 0 0 #88bfdf, 5px 0 0 0 #1d4b70; }
.stacked svg { margin-right: 2px; }
.lit { background: linear-gradient(150deg, rgba(250,253,255,.85), rgba(190,225,245,.55)); }
.th { width: 26px; height: 22px; }
.streak { position: absolute; left: 1042px; top: 1px; width: 120px; height: 39px; filter: blur(2px); }
.tray { display: flex; gap: 8px; margin: 12px 0 0 auto; }
.tray svg { width: 16px; height: 16px; }
.clock { width: 84px; padding-top: 3px; text-align: center; color: #fff; font: 12px/17px "Open Sans", sans-serif; letter-spacing: -.4px; }
.showdesk { width: 14px; margin-left: -5px; height: 38px; margin-top: 1px; border: 1px solid #7b93ad; background: linear-gradient(150deg, #5a7394, #1f3e68 60%); }

/* floating windows */
.mousepos { position: absolute; left: 1185px; top: 169px; width: 93px; height: 63px; border: 1px solid #3d4753; background: linear-gradient(100deg, #d0deea, #b1c3d6 50%, #c5d4e3); box-shadow: inset 0 0 0 1px #eaf2f9, 1px 2px 6px rgba(0,0,0,.45); padding: 4px 5px; font: 12px/16px "Open Sans", sans-serif; letter-spacing: -.3px; }
.mp-title { display: flex; justify-content: space-between; height: 19px; padding-left: 2px; white-space: nowrap; }
.mp-title b { width: 17px; height: 17px; border: 1px solid #65737f; border-radius: 2px; display: flex; align-items: center; justify-content: center; }
.mp-title svg { width: 8px; height: 8px; }
.mp-body { height: 33px; background: #f0f0f0; border: 1px solid #2b2b2b; line-height: 33px; padding-left: 16px; letter-spacing: -.65px; }
.dialog { position: absolute; left: 658px; top: 305px; width: 290px; height: 295px; background: #d6d5cc; border: 1px solid; border-color: #d6d5cc #000 #000 #d6d5cc; box-shadow: inset 1px 1px #fff, inset -1px -1px #808080; padding: 3px; display: flex; flex-direction: column; }
.dlg-title { height: 21px; display: flex; align-items: center; background: linear-gradient(90deg, #02067f, #0e86d8); color: #fff; font: 12px/20px "Open Sans", sans-serif; padding-left: 2px; letter-spacing: -.24px; }
.dlg-title span { margin-left: 4px; width: 156px; white-space: nowrap; }
.dlg-title .winbtn { flex: none; }
.dlg-addr { display: flex; height: 23px; padding-top: 1px; justify-content: space-between; background: #d6d5cc; }
.dlg-url { display: flex; width: 255px; height: 21px; border: 1px solid; border-color: #111 #fff #fff #111; align-items: center; padding-left: 1px; }
.dlg-url .url { width: 231px; padding-top: 2px; margin-left: 6px; }
.dlg-body { flex: 1; background: #eff7f7; padding: 21px 0 0 27px; }
.dlg-body .in { width: 220px; line-height: 16px; border-color: #676f78 #b5bdc8 #b5bdc8 #676f78; }
.dlg-body .ro { background: #dfe6e7; letter-spacing: -.18px; }
.dlg-body label { letter-spacing: -.17px; }
.pair { display: flex; margin-top: 3px; gap: 4px; }
.pa { width: 107px; } .pb { width: 109px; }
.dlg-body .pair .in { width: 100%; }
.dlg-body .pair label { letter-spacing: -.19px; }
.dlg-body .pair .pa label { letter-spacing: -.32px; }
.dlg-body .pn { margin-top: 5px; }
.dlg-body .vl { margin-top: 3px; }
.dlg-body .in.val { width: 195px; background: #fff; }
.caret { display: block; width: 1px; height: 13px; margin: 2px 0 0 0; background: #000; }
.dlg-body .dd { margin-left: 5px; background: #e9e9e9; border-color: #b5bdc8 #676f78 #676f78 #b5bdc8; }
.dlg-body .btn { background: #e9e9e9; height: 19px; line-height: 16px; padding: 0 0 1px 1px; border-color: #b5bdc8 #676f78 #676f78 #b5bdc8; }
.dbtns { margin-top: 36px; gap: 8px; }
.save { width: 44px; } .cancel { width: 45px; }
```
